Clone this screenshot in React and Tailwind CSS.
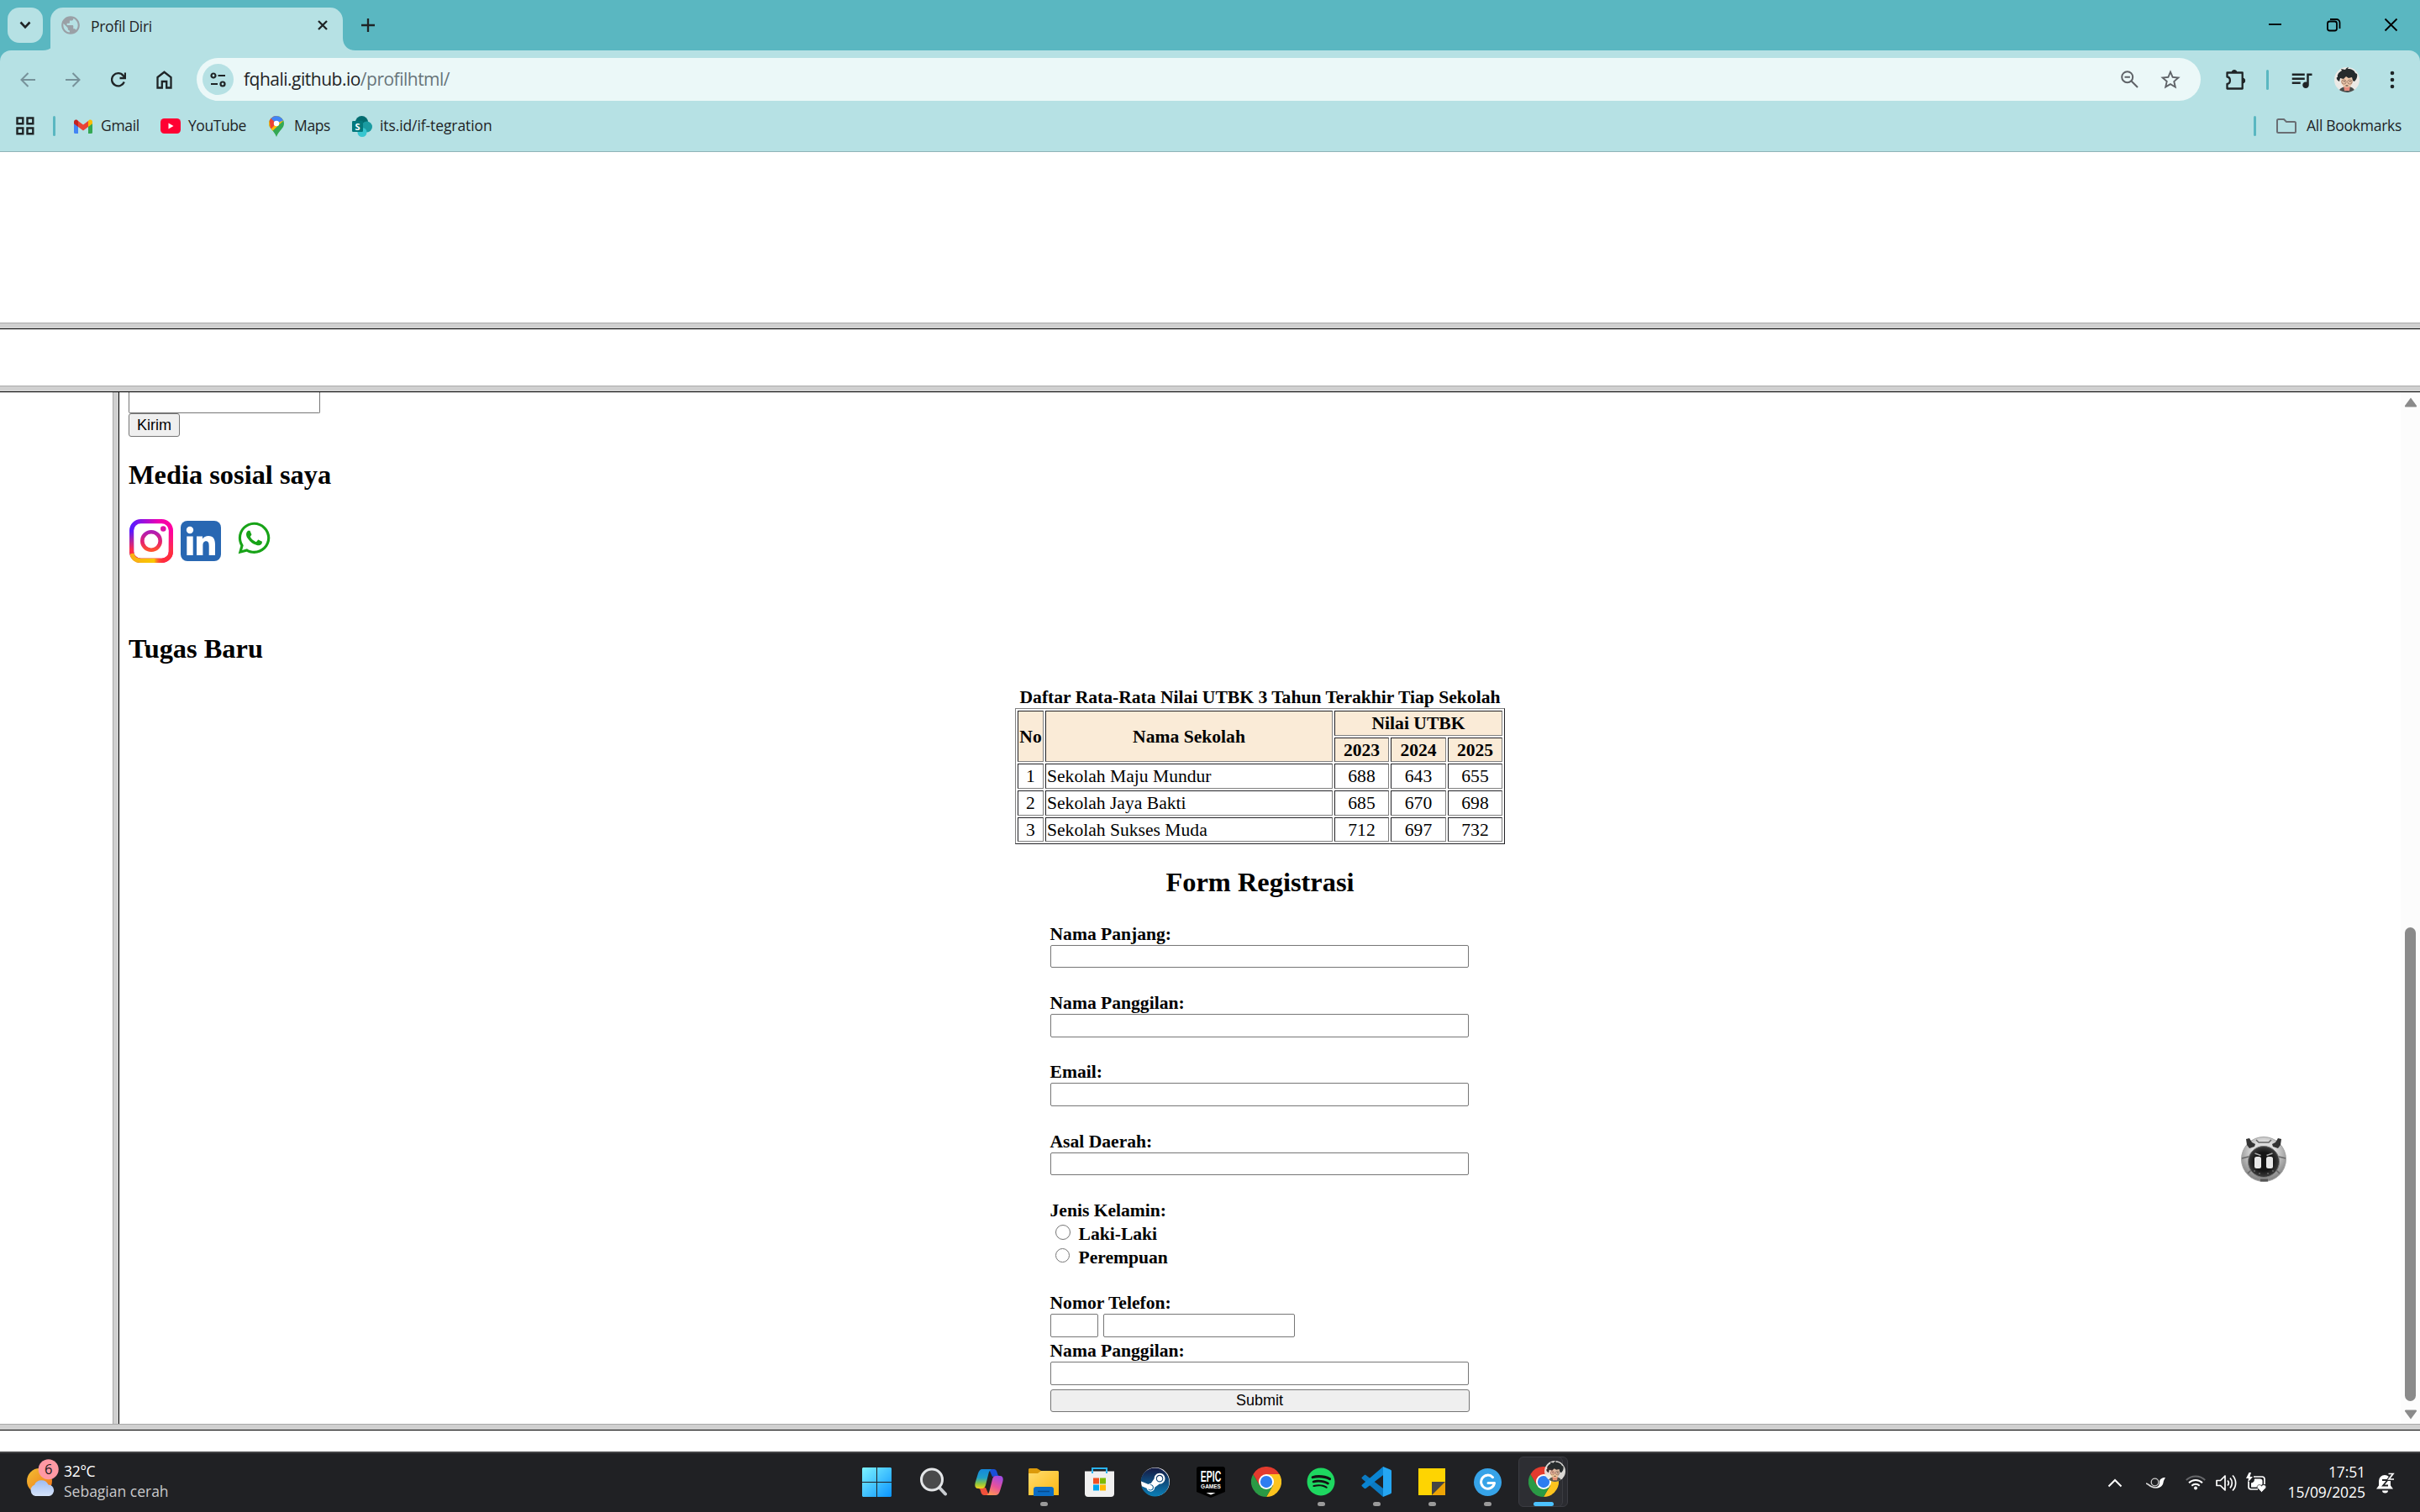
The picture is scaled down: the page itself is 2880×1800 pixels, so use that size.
import React from "react";
import { FaWhatsapp, FaSpotify, FaSteam } from "react-icons/fa";
import { MdQueueMusic, MdStarOutline, MdPublic } from "react-icons/md";

const ui = "font-['Open_Sans','Noto_Sans',sans-serif] whitespace-nowrap";

function Avatar({ size }) {
  return (
    <svg width={size} height={size} viewBox="0 0 30 30" className="shrink-0">
      <clipPath id={"av" + size}><circle cx="15" cy="15" r="15" /></clipPath>
      <g clipPath={`url(#av${size})`}>
        <rect width="30" height="30" fill="#eceae6" />
        <path d="M5 30c1-5 5-7 10-7s9 2 10 7z" fill="#4a4d4c" />
        <path d="M11 22h8l-1 6h-6z" fill="#e58d7f" />
        <ellipse cx="15" cy="16.500" rx="7" ry="7.500" fill="#eec8ab" />
        <path d="M4 12C3 8 7 5 9 4l-1-2 5 1c1-2 3-3 4-3l-1 2c5 0 8 2 9 5l2 1c1 4-1 7-3 9l-2-1-1-4-4 1-3-2-3 3-4-1-1 4c-2-1-4-3-3-5z" fill="#262b2c" />
        <circle cx="11.500" cy="17.500" r="2.600" fill="none" stroke="#8a6a5a" strokeWidth=".8" />
        <circle cx="18.500" cy="17.500" r="2.600" fill="none" stroke="#8a6a5a" strokeWidth=".8" />
        <path d="M11 17h1.500M18 17h1.500M13.500 22h3" stroke="#3b2a25" strokeWidth="1" />
      </g>
    </svg>
  );
}

function Chrome() {
  return (
    <svg width="36" height="36" viewBox="0 0 48 48">
      <path d="M24 12H44.800A24 24 0 0 1 24 48L34.400 30z" fill="#fcc31e" />
      <path d="M13.600 30L3.200 12A24 24 0 0 0 24 48L34.400 30z" fill="#2a9a45" />
      <path d="M3.200 12A24 24 0 0 1 44.800 12H24L13.600 30z" fill="#e33b2e" />
      <circle cx="24" cy="24" r="12" fill="#fff" />
      <circle cx="24" cy="24" r="9.500" fill="#2e7df0" />
    </svg>
  );
}

function TabStrip() {
  return (
    <div className="flex h-[60px] items-start bg-[#5ab7c1]">
      <div className="ml-[9px] mt-[9px] flex h-[42px] w-[42px] items-center justify-center rounded-[14px] bg-[#b6e1e4]">
        <svg width="14" height="10" viewBox="0 0 14 10" fill="none" stroke="#1f2426" strokeWidth="2.600"><path d="M1.500 1.500L7 7.300l5.500-5.800" /></svg>
      </div>
      <svg className="ml-0 mt-[45px] -mr-[6px]" width="15" height="15" viewBox="0 0 15 15"><path d="M15 0v15H0C9 15 15 9 15 0z" fill="#b6e1e4" /></svg>
      <div className="mt-[9px] flex h-[51px] w-[348px] items-center rounded-t-[15px] bg-[#b6e1e4] pb-[9px]">
        <MdPublic className="ml-[11px] h-[26px] w-[26px] text-[#9aa0a6]" />
        <span className={ui + " ml-[11px] w-[260px] pt-[2px] text-[17.500px] tracking-[-0.300px] text-[#1f2426]"}>Profil Diri</span>
        <svg className="ml-[10px]" width="12" height="12" viewBox="0 0 12 12" stroke="#1f2426" strokeWidth="2.300"><path d="M1 1l10 10M11 1L1 11" /></svg>
      </div>
      <svg className="mt-[45px]" width="15" height="15" viewBox="0 0 15 15"><path d="M0 0v15h15C6 15 0 9 0 0z" fill="#b6e1e4" /></svg>
      <svg className="ml-[7px] mt-[22px]" width="16" height="16" viewBox="0 0 16 16" stroke="#1f2426" strokeWidth="2.300"><path d="M8 0v16M0 8h16" /></svg>
      <svg className="ml-auto mr-[26px] mt-[21px]" width="154" height="18" viewBox="0 0 154 18" fill="none" stroke="#000" strokeWidth="1.800">
        <path d="M0 8h15" />
        <rect x="70" y="4.500" width="11" height="11" rx="2.500" />
        <path d="M73 2h7.500a4 4 0 0 1 4 4v7" />
        <path d="M138.500 1.500l14 14M152.500 1.500l-14 14" />
      </svg>
    </div>
  );
}

function Toolbar() {
  return (
    <div className="flex h-[69px] items-center bg-[#5ab7c1]">
      <div className="flex h-[69px] w-full items-center rounded-t-[13px] bg-[#b6e1e4]">
        <svg className="ml-[24px]" width="18" height="18" viewBox="0 0 18 18" fill="none" stroke="#77929a" strokeWidth="2"><path d="M18 9H2M9.500 1L1.500 9l8 8" /></svg>
        <svg className="ml-[36px]" width="18" height="18" viewBox="0 0 18 18" fill="none" stroke="#77929a" strokeWidth="2"><path d="M0 9h16M8.500 1l8 8-8 8" /></svg>
        <svg className="ml-[36px]" width="18" height="18" viewBox="0 0 18 18" fill="none" stroke="#1f2426" strokeWidth="2.300"><path d="M15.800 11.500A7.600 7.600 0 1 1 14.600 4L17 6.500M17 .5V7h-6.500" /></svg>
        <svg className="ml-[36px]" width="19" height="22" viewBox="0 0 19 22" fill="none" stroke="#1f2426" strokeWidth="2.300"><path d="M1.500 8L9.500 1.800 17.500 8v12.500h-5.300v-7.500H6.800v7.500H1.500z" /></svg>
        <div className="ml-[29px] flex h-[51px] w-[2385px] items-center rounded-full bg-[#ebf8f8]">
          <div className="ml-[7px] flex h-[37px] w-[37px] items-center justify-center rounded-full bg-[#b6e1e4]">
            <svg width="19" height="18" viewBox="0 0 19 18" fill="none" stroke="#1f2426" strokeWidth="2.200"><circle cx="4" cy="4" r="2.500" /><path d="M9.500 4H18M1 14h8" /><circle cx="15" cy="14" r="2.500" /></svg>
          </div>
          <span className={ui + " ml-[12px] text-[21px] tracking-[-0.500px] text-[#1f2426]"}>fqhali.github.io<span className="text-[#68757a]">/profilhtml/</span></span>
          <svg className="ml-auto" width="21" height="21" viewBox="0 0 21 21" fill="none" stroke="#5f6368" strokeWidth="2"><circle cx="7.700" cy="7.700" r="6.500" /><path d="M12.500 12.500l7.500 7.500M4.500 7.700h6.400" /></svg>
          <MdStarOutline className="ml-[24px] mr-[22px] h-[28px] w-[28px] text-[#5f6368]" />
        </div>
        <svg className="ml-[29px]" width="25" height="26" viewBox="0 0 25 26" fill="none" stroke="#1f2426" strokeWidth="2.300"><path d="M2.500 4.500h18.200v19H2.500V18c4.500-.5 4.500-8 0-8.500z" strokeLinejoin="round" /><path d="M8 4.500a3 3 0 0 1 6 0zM20.700 11a3 3 0 0 1 0 6z" fill="#1f2426" strokeWidth="1" /></svg>
        <div className="ml-[24px] h-[24px] w-[3px] rounded bg-[#5ab7c1]" />
        <MdQueueMusic className="ml-[24px] h-[30px] w-[30px] text-[#1f2426]" />
        <div className="ml-[24px] flex"><Avatar size={30} /></div>
        <svg className="ml-[36px]" width="6" height="22" viewBox="0 0 6 22" fill="#1f2426"><circle cx="3" cy="3" r="2.300" /><circle cx="3" cy="11" r="2.300" /><circle cx="3" cy="19" r="2.300" /></svg>
      </div>
    </div>
  );
}

function Bookmarks() {
  const t = ui + " pb-px text-[17.500px] text-[#1f2426]";
  return (
    <div className="flex h-[52px] items-start border-b border-[#8fb4b8] bg-[#b6e1e4]">
      <div className="flex h-[42px] w-full items-center">
        <svg className="ml-[19px]" width="22" height="22" viewBox="0 0 22 22" fill="none" stroke="#1f2426" strokeWidth="2.400"><path d="M1.500 1.500h6.800v6.800H1.500zM13.500 1.500h6.800v6.800h-6.800zM1.500 13.500h6.800v6.800H1.500zM13.500 13.500h6.800v6.800h-6.800z" /></svg>
        <div className="ml-[22px] h-[24px] w-[3px] rounded bg-[#5ab7c1]" />
        <svg className="ml-[22px]" width="22" height="17" viewBox="0 0 22 17"><path d="M0 3v12.500A1.500 1.500 0 0 0 1.500 17H5V7z" fill="#4285f4" /><path d="M17 7v10h3.500a1.500 1.500 0 0 0 1.500-1.500V3z" fill="#34a853" /><path d="M17 2v7l5-3.800V3c0-2.700-3-3.600-5-1z" fill="#fbbc04" /><path d="M0 3v2.200L5 9V2C3-.6 0 .3 0 3z" fill="#c5221f" /><path d="M5 2v7l6 4.500L17 9V2l-6 4.500z" fill="#ea4335" /></svg>
        <span className={t + " ml-[10px] w-[71px] tracking-[-0.300px]"}>Gmail</span>
        <svg width="24" height="18" viewBox="0 0 24 18"><rect width="24" height="18" rx="4.500" fill="#ff0033" /><path d="M9.500 5.500v7l6-3.500z" fill="#fff" /></svg>
        <span className={t + " ml-[9px] w-[96px] tracking-[-0.450px]"}>YouTube</span>
        <svg width="18" height="25" viewBox="0 0 18 25"><clipPath id="pin"><path d="M9 0a9 9 0 0 1 9 9c0 6-6 8-9 16C6 17 0 15 0 9a9 9 0 0 1 9-9z" /></clipPath><g clipPath="url(#pin)"><rect width="18" height="25" fill="#34a853" /><path d="M0 0h18v5L0 22z" fill="#fbbc04" /><path d="M0 0h9v9L2 16z" fill="#ea4335" /><path d="M3 0h15v5l-9 4-6.500-6z" fill="#4285f4" /></g><circle cx="9" cy="9" r="3.200" fill="#fff" /></svg>
        <span className={t + " ml-[12px] w-[69px] tracking-[-0.350px]"}>Maps</span>
        <svg width="24" height="25" viewBox="0 0 24 25"><circle cx="11.500" cy="7.500" r="7.500" fill="#036c70" /><circle cx="17.500" cy="13" r="6.500" fill="#1a9ba1" /><circle cx="12" cy="19.500" r="5.500" fill="#37c6d0" /><rect y="6" width="13" height="13" rx="1.200" fill="#03787c" /><text x="6.500" y="16.500" fontSize="11" fontWeight="700" fill="#fff" textAnchor="middle" fontFamily="Open Sans">S</text></svg>
        <span className={t + " ml-[9px] tracking-[-0.100px]"}>its.id/if-tegration</span>
        <div className="ml-auto h-[24px] w-[3px] rounded bg-[#5ab7c1]" />
        <svg className="ml-[24px]" width="24" height="18" viewBox="0 0 24 18" fill="none" stroke="#6a6e73" strokeWidth="2"><path d="M1 2.500A1.500 1.500 0 0 1 2.500 1h6.500l3 3h9.500A1.500 1.500 0 0 1 23 5.500v10a1.500 1.500 0 0 1-1.500 1.500h-19A1.500 1.500 0 0 1 1 15.500z" /></svg>
        <span className={t + " ml-[12px] mr-[22px] w-[113px] tracking-[-0.280px]"}>All Bookmarks</span>
      </div>
    </div>
  );
}

const Bar = () => <div className="h-[8px] w-full shrink-0 border-b border-t border-b-black border-t-[#a9a9a9] bg-[#d0d0d0]" />;

function Socials() {
  return (
    <div className="flex h-[54px] shrink-0 items-start pl-px">
      <svg width="52" height="52" viewBox="0 0 52 52">
        <defs>
          <linearGradient id="ig1" x1="0" y1="0" x2="1" y2="0"><stop offset="0" stopColor="#5a1bff" /><stop offset=".7" stopColor="#f000b0" /><stop offset="1" stopColor="#ff00a0" /></linearGradient>
          <linearGradient id="ig2" x1="0" y1="0" x2="0" y2="1"><stop offset=".25" stopColor="#ff2d55" stopOpacity="0" /><stop offset=".72" stopColor="#ff2d4b" /><stop offset=".85" stopColor="#ff2d3b" /></linearGradient>
          <linearGradient id="ig3" x1="0" y1="1" x2="1" y2="1"><stop offset="0" stopColor="#f9b016" /><stop offset=".6" stopColor="#f9c800" /><stop offset=".85" stopColor="#ff2d4b" stopOpacity="0" /></linearGradient>
          <linearGradient id="ig4" x1="0" y1="0" x2="0" y2="1"><stop offset="0" stopColor="#b01cb4" /><stop offset=".6" stopColor="#e8246a" /><stop offset="1" stopColor="#ff5030" /></linearGradient>
        </defs>
        <g fill="none" strokeWidth="5.200">
          <rect x="2.600" y="2.600" width="46.800" height="46.800" rx="11" stroke="url(#ig1)" />
          <rect x="2.600" y="2.600" width="46.800" height="46.800" rx="11" stroke="url(#ig2)" />
          <path d="M3 41c1 6 5 8.400 10 8.400h26c4 0 6-1 8-3" stroke="url(#ig3)" />
          <circle cx="26" cy="26" r="10.700" stroke="url(#ig4)" strokeWidth="4.600" />
        </g>
        <circle cx="40.300" cy="11.500" r="3.300" fill="#e010a8" />
      </svg>
      <svg className="ml-[9px] mt-[2px]" width="48" height="48" viewBox="0 0 48 48"><rect width="48" height="48" rx="8" fill="#2867b2" /><g fill="#fff"><circle cx="11" cy="11" r="4.200" /><path d="M7.300 18.500h7.400V41H7.300zM19 18.500h7v3c1.500-2.300 4-3.500 7-3.500 6 0 8 4 8 10.500V41h-7.300V30c0-3.500-.7-5.700-3.400-5.700-2.900 0-3.900 2.200-3.900 5.700v11H19z" /></g></svg>
      <FaWhatsapp className="ml-[18px] mt-px h-[43px] w-[43px] text-[#18a318]" />
    </div>
  );
}

const dark = "border border-[#222226] border-b-[#808080] border-r-[#808080] flex items-center justify-center";
const head = dark + " bg-[#faebd7] font-bold";

function ScoreTable() {
  const rows = [["1", "Sekolah Maju Mundur", "688", "643", "655"], ["2", "Sekolah Jaya Bakti", "685", "670", "698"], ["3", "Sekolah Sukses Muda", "712", "697", "732"]];
  return (
    <div className="grid h-[162px] w-[583px] grid-cols-[31px_342px_65px_66px_65px] grid-rows-[30px_29px_30px_30px_29px] gap-[2px] border border-[#808080] border-b-[#222226] border-r-[#222226] p-[2px] leading-[24px]">
      <div className={head + " row-span-2"}>No</div>
      <div className={head + " row-span-2"}>Nama Sekolah</div>
      <div className={head + " col-span-3"}>Nilai UTBK</div>
      <div className={head}>2023</div>
      <div className={head}>2024</div>
      <div className={head}>2025</div>
      {rows.map((r) => r.map((c, i) => (
        <div key={r[0] + i} className={i === 1 ? "flex items-center border border-[#222226] border-b-[#808080] border-r-[#808080] pl-px" : dark}>{c}</div>
      )))}
    </div>
  );
}

const box = "block rounded-[2px] border border-[#767676] bg-white outline-none";

function Field({ label, h, mb }) {
  return (
    <label className="block">
      <span className="block h-[25px]">{label}</span>
      <input className={box + " w-[498px] " + h + " " + mb} />
    </label>
  );
}

function Radio({ label, d }) {
  return (
    <label className="flex h-[28px] items-start">
      <span className={"mt-px block rounded-full border-[1.500px] border-[#767676] " + d} />
      <span>{label}</span>
    </label>
  );
}

function Form() {
  return (
    <form className="mt-[32px] w-[500px] font-bold leading-[24px]">
      <Field label="Nama Panjang:" h="h-[27px]" mb="mb-[30px]" />
      <Field label="Nama Panggilan:" h="h-[28px]" mb="mb-[29px]" />
      <Field label="Email:" h="h-[28px]" mb="mb-[30px]" />
      <Field label="Asal Daerah:" h="h-[27px]" mb="mb-[30px]" />
      <div className="h-[28px]">Jenis Kelamin:</div>
      <Radio label="Laki-Laki" d="ml-[6px] h-[18px] w-[18px] mr-[10px]" />
      <Radio label="Perempuan" d="ml-[6.500px] h-[17px] w-[17px] mr-[10.500px]" />
      <div className="mt-[26px] h-[25px]">Nomor Telefon:</div>
      <div className="mb-[4px] flex gap-[6px]">
        <input className={box + " h-[28px] w-[57px]"} />
        <input className={box + " h-[28px] w-[228px]"} />
      </div>
      <Field label="Nama Panggilan:" h="h-[28px]" mb="mb-[5px]" />
      <button type="button" className="block h-[27px] w-[499px] rounded-[3px] border border-[#767676] bg-[#efefef] font-['Liberation_Sans',Arial,sans-serif] text-[18px] font-normal leading-[25px]">Submit</button>
    </form>
  );
}

function MainFrame() {
  return (
    <div className="flex h-full min-w-0 flex-1">
      <div className="flex min-w-0 flex-1 flex-col overflow-hidden pl-[11px] font-['Liberation_Serif','Times_New_Roman',serif] text-[21.600px] text-black">
        <div className="h-[25px] w-[228px] shrink-0 rounded-b-[2px] border border-t-0 border-[#767676]" />
        <button type="button" className="block h-[28px] w-[61px] shrink-0 rounded-[3px] border border-[#767676] bg-[#efefef] pb-px font-['Liberation_Sans',Arial,sans-serif] text-[18px] leading-[24px]">Kirim</button>
        <h2 className="mb-[35px] mt-[27px] h-[36px] shrink-0 text-[32.400px] font-bold leading-[36px]">Media sosial saya</h2>
        <Socials />
        <h2 className="mt-[82px] h-[36px] shrink-0 text-[32.400px] font-bold leading-[36px]">Tugas Baru</h2>
        <div className="flex shrink-0 flex-col items-center pr-[11px]">
          <div className="mt-[28px] h-[25px] font-bold leading-[24px]">Daftar Rata-Rata Nilai UTBK 3 Tahun Terakhir Tiap Sekolah</div>
          <ScoreTable />
          <h2 className="mt-[27px] h-[36px] text-[32.400px] font-bold leading-[36px]">Form Registrasi</h2>
          <Form />
        </div>
      </div>
      <div className="flex w-[23px] shrink-0 flex-col items-center bg-[#fcfcfc]">
        <svg className="mt-[6px] shrink-0" width="16" height="12" viewBox="0 0 16 12"><path d="M8 .5l7 9.500q.5 1.500-1 1.500H2Q.5 11.500 1 10z" fill="#8a8a8a" /></svg>
        <div className="mt-[619px] h-[564px] w-[13px] shrink-0 rounded-full bg-[#8a8a8a]" />
        <svg className="mt-[10px] shrink-0" width="16" height="12" viewBox="0 0 16 12"><path d="M8 11.500L1 2Q.5.5 2 .5h12q1.500 0 1 1.500z" fill="#8a8a8a" /></svg>
      </div>
    </div>
  );
}

function Robot() {
  return (
    <svg className="absolute left-[2666px] top-[1351px]" width="56" height="58" viewBox="0 0 56 58">
      <defs>
        <radialGradient id="rb" cx=".5" cy=".35" r=".65"><stop offset=".4" stopColor="#dcdcdc" /><stop offset="1" stopColor="#7d7d7d" /></radialGradient>
        <radialGradient id="face" cx=".5" cy=".5" r=".5"><stop offset=".6" stopColor="#161616" /><stop offset="1" stopColor="#3d3d3d" /></radialGradient>
      </defs>
      <circle cx="28" cy="29" r="26.500" fill="url(#rb)" stroke="#a5a5a5" strokeWidth="1" />
      <path d="M2 28l8-2M46 26l8 2M9 46l5-5M47 46l-5-5" stroke="#666" strokeWidth="1.500" />
      <path d="M7 5l4-1 3 5 4 2-1 3-6 2-3-4zM49 5l-4-1-3 5-4 2 1 3 6 2 3-4z" fill="#333" />
      <path d="M19 6l3 3h12l3-3" fill="none" stroke="#666" strokeWidth="1.500" />
      <circle cx="28" cy="32" r="18.500" fill="url(#face)" stroke="#777" strokeWidth="1" />
      <rect x="17" y="26" width="8" height="14" rx="2.500" fill="#e8e8e8" />
      <rect x="31" y="26" width="8" height="14" rx="2.500" fill="#e8e8e8" />
      <path d="M17.500 22l7 2.500M38.500 22l-7 2.500" stroke="#aaa" strokeWidth="1.500" />
      <path d="M16 43h2M22 46h2M32 46h2M38 43h2" stroke="#666" strokeWidth="1.500" />
      <path d="M24 52.500h9v3h-9z" fill="#555" />
    </svg>
  );
}

function Slot({ children, dot }) {
  return (
    <div className="flex h-[70px] w-[66px] flex-col items-center">
      <div className="mt-[16px] flex h-[36px] items-center justify-center">{children}</div>
      {dot && <div className="mt-[6px] h-[5px] w-[9px] rounded-full bg-[#9a9a9a]" />}
    </div>
  );
}

function TaskIcons() {
  return (
    <div className="ml-[811px] flex w-[858px]">
      <Slot><svg className="mr-[1px]" width="35" height="35" viewBox="0 0 35 35"><defs><linearGradient id="win" x1="0" y1="0" x2="1" y2="1"><stop stopColor="#7df3ff" /><stop offset="1" stopColor="#0a94ff" /></linearGradient></defs><path d="M1 0h16v17H0V1zM18 0h16l1 1v16H18zM0 18h17v17H1l-1-1zM18 18h17v16l-1 1H18z" fill="url(#win)" /></svg></Slot>
      <Slot><svg className="ml-[2px]" width="34" height="34" viewBox="0 0 34 34" fill="none"><path d="M23 23l8 8.500" stroke="#c9ccd0" strokeWidth="4" strokeLinecap="round" /><circle cx="15" cy="14.500" r="12.500" fill="#4a4a4b" stroke="#e4e6e8" strokeWidth="3" /></svg></Slot>
      <Slot>
        <svg className="ml-px" width="34" height="31" viewBox="0 0 34 31">
          <defs>
            <linearGradient id="co1" x1="0" y1="0" x2="0" y2="1"><stop stopColor="#1488dc" /><stop offset=".45" stopColor="#20a0c8" /><stop offset=".75" stopColor="#8cc63f" /><stop offset="1" stopColor="#f5d11a" /></linearGradient>
            <linearGradient id="co2" x1=".6" y1="0" x2=".2" y2="1"><stop stopColor="#a44be0" /><stop offset=".5" stopColor="#e8529a" /><stop offset="1" stopColor="#ff9a50" /></linearGradient>
          </defs>
          <path d="M17 0h6c2.500 0 3.500 3 4 5 .4 1.700 1 3 3 3l-9 1z" fill="#1a4fd8" />
          <path d="M17 31h-6c-2.500 0-3.500-3-4-5-.4-1.700-1-3-3-3l9-1z" fill="#f0503a" />
          <path d="M9 0h11c-2 1-3 3-3.500 5l-3.500 14c-.7 2.500-2 4-4 4H4C0 23-.2 19 .8 15.500L4 5C5 2 6.500 0 9 0z" fill="url(#co1)" />
          <path d="M25 31H14c2-1 3-3 3.500-5L21 12c.7-2.500 2-4 4-4h5c4 0 4.200 4 3.200 7.500L30 26c-1 3-2.500 5-5 5z" fill="url(#co2)" />
        </svg>
      </Slot>
      <Slot dot><svg width="36" height="33" viewBox="0 0 36 33"><defs><linearGradient id="fo" x1="0" y1="0" x2="1" y2="1"><stop stopColor="#ffdc6e" /><stop offset="1" stopColor="#fcb813" /></linearGradient></defs><path d="M1 0h9l5 3v5H0V1z" fill="#dc9a0a" /><path d="M0 6h11l4-3h20l1 1v28H0z" fill="url(#fo)" /><path d="M6 33v-8a3 3 0 0 1 3-3h18a3 3 0 0 1 3 3v8z" fill="#0a6cc4" /><path d="M11 27.500h14" stroke="#064a8c" strokeWidth="1.500" /></svg></Slot>
      <Slot><svg width="35" height="35" viewBox="0 0 35 35"><path d="M9 6.500V1h17v5.500" fill="none" stroke="#2ab4f2" strokeWidth="2" /><path d="M0 4.500h35V31a4 4 0 0 1-4 4H4a4 4 0 0 1-4-4z" fill="#f0f0f0" /><path d="M9 4.500v2.500M26 4.500v2.500" stroke="#2ab4f2" strokeWidth="2" /><path d="M10 12.500h7v7h-7z" fill="#f25022" /><path d="M18 12.500h7v7h-7z" fill="#7fba00" /><path d="M10 20.500h7v7h-7z" fill="#00a4ef" /><path d="M18 20.500h7v7h-7z" fill="#ffb900" /></svg></Slot>
      <Slot><div className="ml-px flex h-[34px] w-[34px] items-center justify-center rounded-full bg-white"><svg width="0" height="0"><defs><linearGradient id="st" x1="0" y1="0" x2="0" y2="1"><stop stopColor="#151a44" /><stop offset="1" stopColor="#0a80b8" /></linearGradient></defs></svg><FaSteam size={35} style={{ fill: "url(#st)" }} className="shrink-0" /></div></Slot>
      <Slot><svg className="ml-[2px]" width="34" height="37" viewBox="0 0 34 37"><path d="M3 0h28a3 3 0 0 1 3 3v27l-17 7-17-7V3a3 3 0 0 1 3-3z" fill="#000" /><g fill="#fff" fontFamily="Liberation Sans" fontWeight="700" textAnchor="middle"><text x="17" y="10.700" fontSize="10.500" transform="scale(1 1.700)">EPIC</text><text x="17" y="26" fontSize="6.500">GAMES</text></g><path d="M11.500 31h11L17 33.500z" fill="#fff" /></svg></Slot>
      <Slot><div className="ml-px"><Chrome /></div></Slot>
      <Slot dot><div className="flex h-[31px] w-[31px] items-center justify-center rounded-full bg-[#121212]"><FaSpotify size={34} className="shrink-0 text-[#1ed760]" /></div></Slot>
      <Slot dot><svg width="36" height="36" viewBox="0 0 36 36"><path d="M1 12.500l2.500-2.300c.7-.6 1.500-.6 2.200 0L30 29l-4 7L1 14.500c-.7-.6-.7-1.400 0-2z" fill="#0b7ac2" /><path d="M1 23.500l2.500 2.300c.7.600 1.500.6 2.200 0L30 7l-4-7L1 21.500c-.7.600-.7 1.400 0 2z" fill="#0a84d2" /><path d="M26 0l8.500 3.500c1 .5 1.500 1 1.500 2v25c0 1-.5 1.500-1.500 2L26 36z" fill="#25a6f2" /></svg></Slot>
      <Slot dot><svg width="32" height="32" viewBox="0 0 32 32"><path d="M0 0h32v16L16 32H0z" fill="#fed402" /><path d="M16 16h16L16 32z" fill="#454545" /><path d="M32 16v16H16z" fill="#eda405" /></svg></Slot>
      <Slot dot><svg width="33" height="33" viewBox="0 0 33 33"><circle cx="16.500" cy="16.500" r="16.500" fill="#36a3e8" /><path d="M22.500 10.700A8 8 0 1 0 24.500 17.500H17" fill="none" stroke="#fff" strokeWidth="3" strokeLinecap="round" strokeLinejoin="round" /></svg></Slot>
      <div className="relative h-[70px] w-[66px]">
        <div className="absolute left-[11px] top-[4px] h-[60px] w-[52px] rounded-[6px] border border-[#3b3c42] bg-[#2a2b30]" />
        <div className="absolute left-[4px] top-[4px] h-[60px] w-[53px] rounded-[6px] border border-[#3b3c42] bg-[#2d2e33]" />
        <div className="absolute left-[16px] top-[16px]"><Chrome /></div>
        <div className="absolute left-[35px] top-[9px] rounded-full opacity-90"><Avatar size={25} /></div>
        <div className="absolute left-[22px] top-[58px] h-[5px] w-[24px] rounded-full bg-[#4cc2ff]" />
      </div>
    </div>
  );
}

function Taskbar() {
  return (
    <div className="flex h-[72px] border-t-2 border-[#434345] bg-[#202124]">
      <svg className="ml-[32px] mt-[6px]" width="40" height="48" viewBox="0 0 40 48">
        <defs><linearGradient id="sun" x1="0" y1="0" x2="1" y2="1"><stop stopColor="#f2c032" /><stop offset="1" stopColor="#f0701a" /></linearGradient><linearGradient id="cl" x1="0" y1="0" x2="0" y2="1"><stop stopColor="#9dbcf2" /><stop offset="1" stopColor="#d6e4fa" /></linearGradient></defs>
        <circle cx="15" cy="27" r="15" fill="url(#sun)" />
        <path d="M10 45a7 7 0 0 1-1-13.300A9 9 0 0 1 25.500 31.500 6.800 6.800 0 0 1 26.500 45z" fill="url(#cl)" />
        <circle cx="25.700" cy="13.300" r="12" fill="#ff99a4" />
        <text x="25.700" y="19" fontSize="16.500" textAnchor="middle" fontFamily="Open Sans" fill="#1a1a1a">6</text>
      </svg>
      <div className={ui + " ml-[4px] mt-[9px] w-[124px] text-[17.500px] leading-[24px] text-white"}>
        <div className="tracking-[-0.300px]">32°C</div>
        <div className="text-[#c9c9cb]">Sebagian cerah</div>
      </div>
      <TaskIcons />
      <div className="ml-auto flex h-[70px] items-center">
        <svg width="18" height="11" viewBox="0 0 18 11" fill="none" stroke="#fff" strokeWidth="2"><path d="M1.500 9.500L9 2l7.500 7.500" /></svg>
        <svg className="ml-[27px]" width="24" height="15" viewBox="0 0 24 15"><path d="M1 8c3 0 4 5 11 5 5 0 6-3 7-6" fill="none" stroke="#ddd" strokeWidth="1.700" /><circle cx="11.500" cy="6.500" r="4.300" fill="none" stroke="#ccc" strokeWidth="1.300" /><path d="M12 13c4-1 5-4 5-7 0-3 3-5 7-5-1 2-2 3-2.500 6-.5 4-5 7.500-9.500 6z" fill="#fff" /></svg>
        <svg className="ml-[24px]" width="24" height="18" viewBox="0 0 24 18" fill="none" stroke="#fff" strokeWidth="1.900"><path d="M.8 6a16 16 0 0 1 22.400 0" stroke="#66676a" /><path d="M4 9.300a11.500 11.500 0 0 1 16 0M7.300 12.700a6.700 6.700 0 0 1 9.400 0" /><circle cx="12" cy="15.500" r="1.600" fill="#fff" strokeWidth="1" /></svg>
        <svg className="ml-[12px]" width="25" height="21" viewBox="0 0 25 21" fill="none" stroke="#fff" strokeWidth="1.700"><path d="M1 7.500h4.500L11 2v17l-5.500-5.500H1zM14 7.500a4.500 4.500 0 0 1 0 6M17 4.500a9 9 0 0 1 0 12M20 1.500a13 13 0 0 1 0 18" strokeLinejoin="round" /></svg>
        <svg className="ml-[11px]" width="25" height="24" viewBox="0 0 25 24"><path d="M9 5h10a3 3 0 0 1 3 3v6M3 11v6a3 3 0 0 0 3 3h8" fill="none" stroke="#fff" strokeWidth="1.700" /><path d="M10 7.500h6.500q3 0 3 2.500v4l-5 3.500H6v-5q4-.5 4-5z" fill="#fff" /><path d="M3.500 0L0 7h3l-1 5 6-7H4.500L6 0z" fill="#fff" /><path d="M18.500 23.500l-5-5c-1.500-3 2.500-5.500 5-2.500 2.500-3 6.500-.5 5 2.500z" fill="#fff" stroke="#202124" strokeWidth=".7" /></svg>
        <div className={ui + " ml-[24px] w-[93px] pb-[2px] text-right text-[17.500px] leading-[24px] text-white"}>
          <div className="tracking-[-0.100px]">17:51</div>
          <div className="tracking-[-0.050px]">15/09/2025</div>
        </div>
        <svg className="ml-[13px] mr-[30px]" width="22" height="25" viewBox="0 0 22 25"><path d="M3 10a7 7 0 0 1 14 0v5.500l3 4H0l3-4zM7 21.500h7a3.500 3 0 0 1-7 0z" fill="#fff" /><path d="M7 9h6.500L8 15.500h6" fill="none" stroke="#202124" strokeWidth="1.800" /><path d="M14.500 1.500H20l-5 6.500h6" fill="none" stroke="#202124" strokeWidth="4" /><path d="M14.500 1.500H20l-5 6.500h6" fill="none" stroke="#fff" strokeWidth="1.700" /></svg>
      </div>
    </div>
  );
}

export default function App() {
  return (
    <div className="relative flex h-[1800px] w-[2880px] flex-col overflow-hidden bg-white">
      <TabStrip />
      <Toolbar />
      <Bookmarks />
      <div className="h-[203px] shrink-0" />
      <Bar />
      <div className="h-[67px] shrink-0" />
      <Bar />
      <div className="flex h-[1228px] shrink-0">
        <div className="w-[134px] shrink-0" />
        <div className="w-[8px] shrink-0 border-l border-r border-l-[#a9a9a9] border-r-black bg-[#d0d0d0]" />
        <MainFrame />
      </div>
      <Bar />
      <div className="h-[25px] shrink-0" />
      <Taskbar />
      <Robot />
    </div>
  );
}
